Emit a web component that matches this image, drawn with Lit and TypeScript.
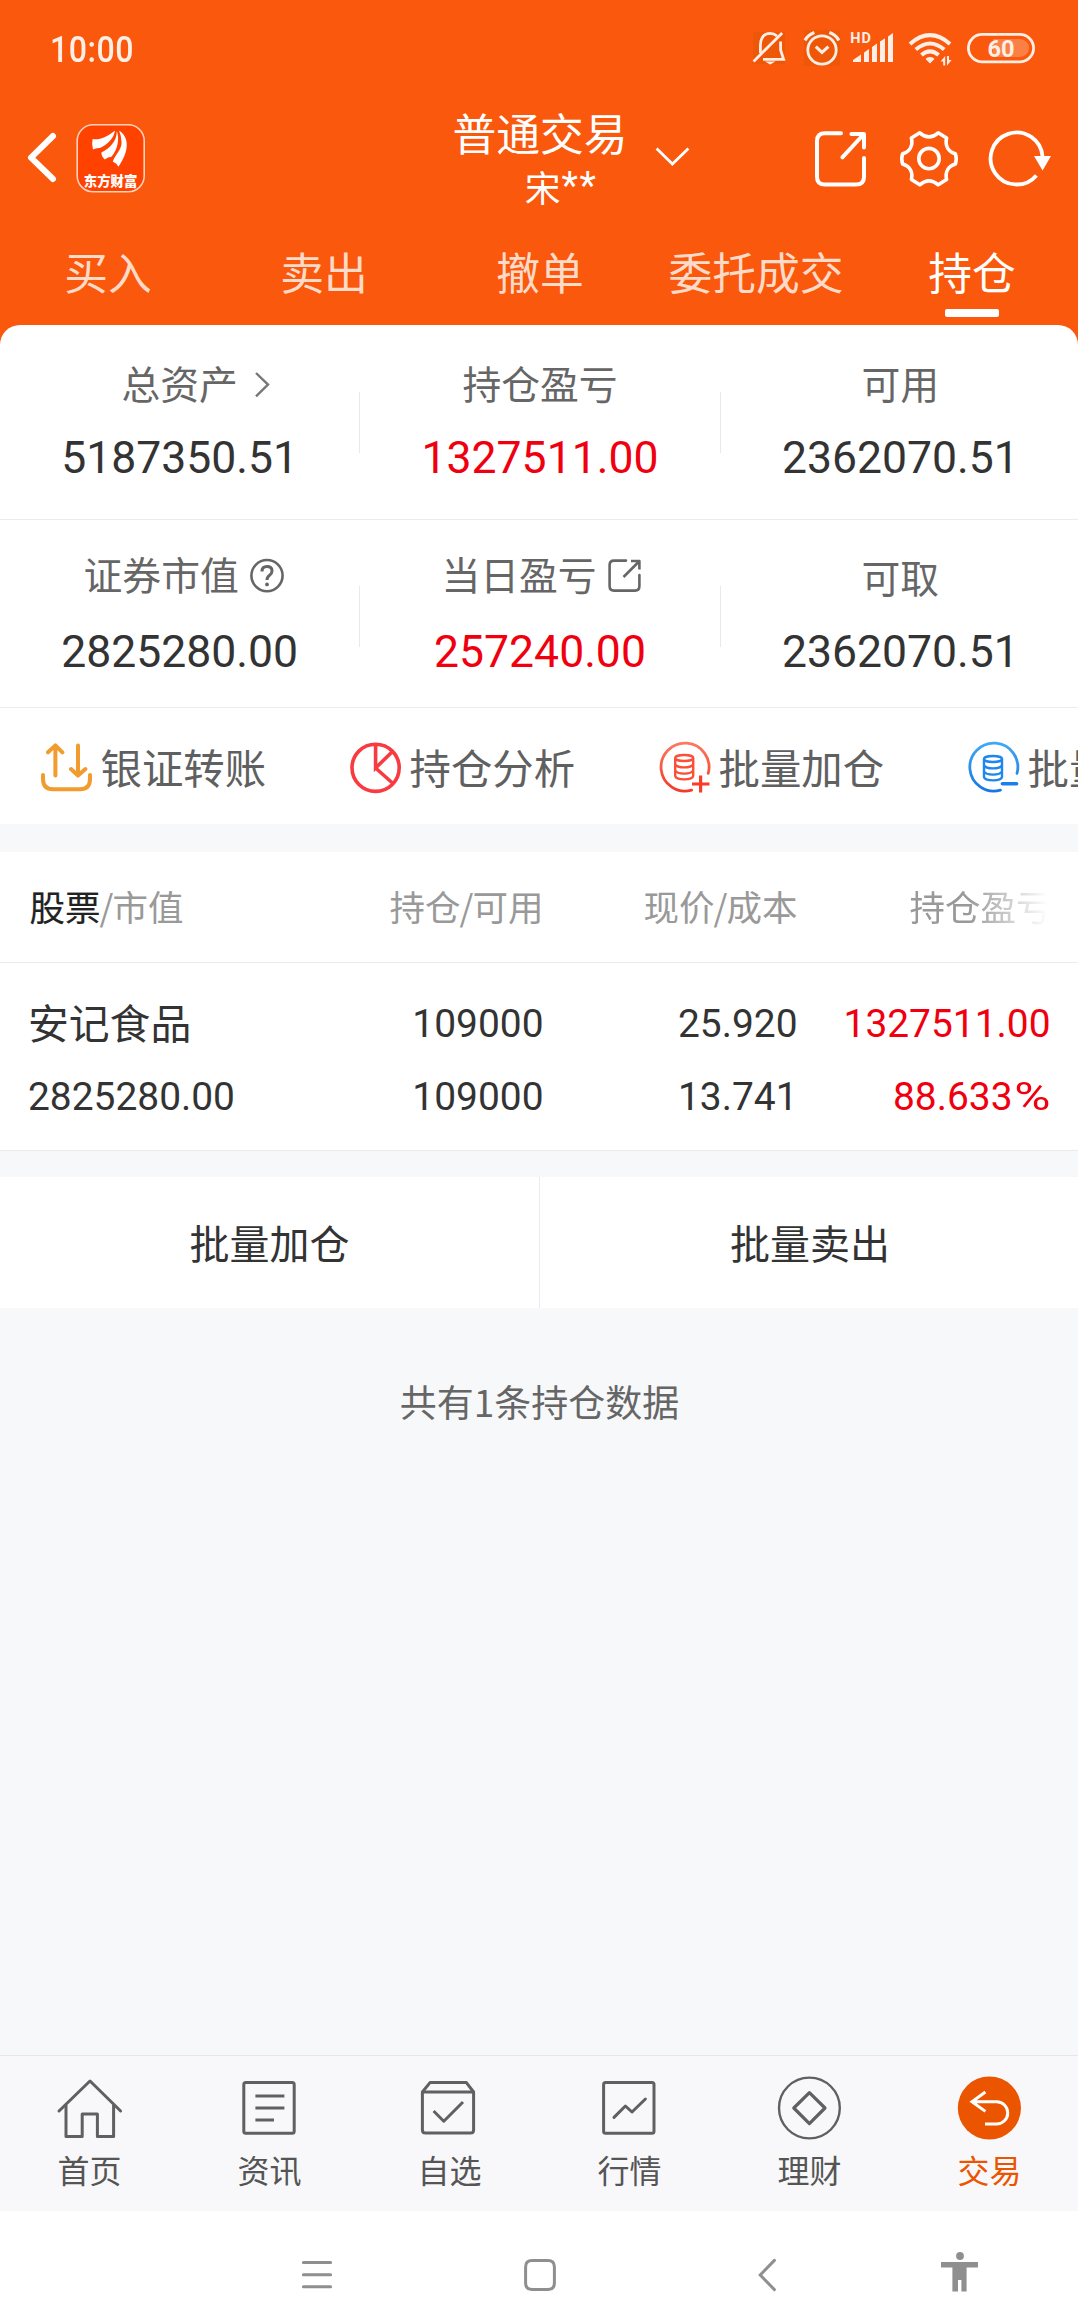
import { LitElement, html, svg, css } from "lit";
import { customElement } from "lit/decorators.js";

const icon = (viewBox: string, w: number, h: number, body: unknown, cls = "") =>
  html`<svg class="icon ${cls}" viewBox=${viewBox} width=${w} height=${h} aria-hidden="true">${body}</svg>`;

const coins = (dx: number, dy: number, paint: string) => svg`
  <g fill="none" stroke=${paint} stroke-width="2.4" transform="translate(${dx} ${dy})">
    <ellipse cx="684.2" cy="758" rx="9" ry="3"/>
    <path d="M675.2 758V776Q676 779.4 684.2 779.4T693.2 776V758M675.2 764.5Q677 767.4 684.2 767.4T693.2 764.5M675.2 770.5Q677 773.6 684.2 773.6T693.2 770.5"/>
  </g>`;

const ring = "M708.2 773.4A24 24 0 1 0 691.6 790.2";

const SMALL_SHARE = icon("606 557 37 37", 37, 37, svg`
  <g fill="none" stroke="#666" stroke-width="2.6" stroke-linejoin="round">
    <path d="M626 560.6H614Q609.6 560.6 609.6 565V586Q609.6 590.6 614 590.6H635Q639.4 590.6 639.4 586V575" stroke-linecap="round"/>
    <path d="M631 561H639.4V569.5M639 561.5L623.5 577"/>
  </g>`);

const HELP = icon("249 558 36 36", 36, 36, svg`
  <g fill="none" stroke="#666" stroke-width="2.6">
    <circle cx="267" cy="575.6" r="15.6"/>
    <path d="M262 571.5Q262 566.6 267 566.6T272 571Q272 573.6 269.6 575.2Q267 577 267 580" stroke-width="3"/>
  </g><circle cx="267" cy="584.4" r="1.9" fill="#666"/>`);

const CHEVRON = icon("252 370 18 30", 18, 30, svg`
  <path d="M255 373L267 384.6L255 396.4" fill="none" stroke="#777" stroke-width="2.4"/>`);

interface Stat { label: string; value: string; up?: boolean; icon?: unknown; kind?: string; }

const STATS: Stat[][] = [
  [
    { label: "总资产", value: "5187350.51", icon: CHEVRON, kind: "more" },
    { label: "持仓盈亏", value: "1327511.00", up: true },
    { label: "可用", value: "2362070.51" },
  ],
  [
    { label: "证券市值", value: "2825280.00", icon: HELP, kind: "help" },
    { label: "当日盈亏", value: "257240.00", up: true, icon: SMALL_SHARE, kind: "share" },
    { label: "可取", value: "2362070.51" },
  ],
];

const ACTIONS = [
  {
    label: "银证转账",
    icon: icon("40 741 54 54", 54, 54, svg`
      <g fill="none" stroke="#f29b2e" stroke-width="4" stroke-linecap="round" stroke-linejoin="round">
        <path d="M43 775V779Q43 789.2 53 789.2H80Q90 789.2 90 779V775"/>
        <path d="M55.4 775.5V746M48 752.3L55.4 745.4L62.4 752.3M78 745.5V775M71 769L78 775.6L85.4 769"/>
      </g>`),
  },
  {
    label: "持仓分析",
    icon: icon("349 741 54 54", 54, 54, svg`
      <g fill="none" stroke="#f83b40" stroke-width="3.6">
        <circle cx="375.6" cy="767.8" r="23.6"/>
        <path d="M375.6 744V768L392.5 751.5M375.6 768L393 783.5"/>
      </g>`),
  },
  {
    label: "批量加仓",
    icon: icon("658 741 54 54", 54, 54, svg`
      <defs><linearGradient id="warm" gradientUnits="userSpaceOnUse" x1="684" y1="743" x2="684" y2="792">
        <stop offset="0" stop-color="#fb7a5e"/><stop offset="1" stop-color="#f23a28"/></linearGradient></defs>
      <path d=${ring} fill="none" stroke="url(#warm)" stroke-width="2.8" stroke-linecap="round"/>
      ${coins(0, 0, "#fa4f38")}
      <path d="M692 784H709.5M700.6 775.4V792.6" stroke="#fa3c28" stroke-width="3.2"/>`),
  },
  {
    label: "批量卖出",
    icon: icon("967 741 54 54", 54, 54, svg`
      <defs><linearGradient id="cool" gradientUnits="userSpaceOnUse" x1="684" y1="743" x2="684" y2="792">
        <stop offset="0" stop-color="#41a8f4"/><stop offset="1" stop-color="#1577e2"/></linearGradient></defs>
      <path d=${ring} transform="translate(308.8 0)" fill="none" stroke="url(#cool)" stroke-width="2.8" stroke-linecap="round"/>
      ${coins(308.8, 1, "#1e86ee")}
      <path d="M1002.4 783.8H1016.6" stroke="#1b7fe8" stroke-width="3.6" stroke-linecap="round"/>`),
  },
];

const line = (body: unknown) => svg`<g fill="none" stroke="#606060" stroke-width="3" stroke-linejoin="round">${body}</g>`;

const TABS = [
  { label: "首页", icon: icon("56 2074 68 68", 68, 68, line(svg`
      <path d="M59 2111L90 2081L120.6 2111" stroke-linecap="round"/>
      <path d="M66 2105V2136.6H82.2V2114H97.4V2136.6H113.6V2105"/>`)) },
  { label: "资讯", icon: icon("236 2074 68 68", 68, 68, line(svg`
      <rect x="243.8" y="2082.6" width="50.4" height="50.6" rx="2"/>
      <path d="M255.4 2096H284.4M255.4 2108H284.4M255.4 2120H274"/>`)) },
  { label: "自选", icon: icon("416 2074 68 68", 68, 68, line(svg`
      <path d="M422.4 2092H473.6V2130Q473.6 2133 470.6 2133H425.4Q422.4 2133 422.4 2130Z"/>
      <path d="M422.4 2092L430 2082.6H466.4L473.6 2092"/>
      <path d="M433.6 2111L443.8 2121.2L463 2102"/>`)) },
  { label: "行情", icon: icon("596 2074 68 68", 68, 68, line(svg`
      <rect x="603.6" y="2082.6" width="50.4" height="50.6" rx="2"/>
      <path d="M614 2117.4L625.4 2106L632 2112L645.4 2099" stroke-linecap="round"/>`)) },
  { label: "理财", icon: icon("776 2074 68 68", 68, 68, line(svg`
      <circle cx="809.4" cy="2108" r="30.4" stroke-width="2.4"/>
      <path d="M809.4 2092.6L825 2108L809.4 2123.6L793.8 2108Z" stroke-width="3.2"/>`)) },
  { label: "交易", active: true, icon: icon("956 2074 68 68", 68, 68, svg`
      <circle cx="989.4" cy="2108" r="31.6" fill="#eb5500"/>
      <path d="M985.4 2092L972 2101.8L985.4 2111.4M972 2101.8H996.6A11.1 11.1 0 0 1 996.6 2124H985" fill="none" stroke="#fff" stroke-width="3"/>`) },
];

@customElement("status-bar")
class StatusBar extends LitElement {
  static styles = css`
    :host { display: flex; align-items: center; height: 96px; color: #ffeee6; }
    .clock { flex: 1; padding: 4px 0 0 50px; }
    .time { display: inline-block; font: 500 36.5px/40px Roboto, sans-serif; letter-spacing: .6px; transform: scaleX(.88); transform-origin: 0 50%; }
    .icon { display: block; flex: none; margin-right: 41px; }
    .hd { font: 700 14.5px Roboto, sans-serif; letter-spacing: 1px; }
    .level { font: 700 24.5px Roboto, sans-serif; }
  `;
  render() {
    return html`
      <div class="clock"><span class="time">10:00</span></div>
      ${icon("751 0 286 96", 286, 96, svg`
        <path d="M753 32H785V64H753ZM804 30H840V66H804Z" fill="#ee5708"/>
        <g fill="none" stroke="#ffeee6" stroke-width="2.8">
          <path d="M760.4 53V45Q761 33.6 770 33.4Q774 33.4 777 36M780.6 41.5V50L783.6 59.4H763"/>
          <path d="M753.6 61.4L782.2 33"/>
          <circle cx="822" cy="50" r="14.2"/>
          <path d="M815.8 46.6L822 52.4L828.4 46.6M805 40.4Q808 35 814.4 32.6M838.8 40.4Q836 35 829.4 32.6" stroke-width="3.2"/>
        </g>
        <path d="M765 61.6H775.4L770.2 64.4Z" fill="#ffeee6"/>
        <text class="hd" x="850.2" y="42.8" fill="#ffeee6">HD</text>
        <g fill="#ffeee6">
          <path d="M853 62V60L861 54.4V62ZM864 62V52.4L869 49V62ZM872 62V47L877 43.6V62ZM880 62V41.6L885 38.2V62ZM888 62V36.4L893 33V62Z"/>
          <path d="M930 62.4L926.6 59Q930 56.6 933.4 59Z" stroke="#ffeee6" stroke-width="1.6" stroke-linejoin="round"/>
          <path d="M940.6 61.4L945.2 56V65.4H943.2V61.4ZM951.6 60L947 65.6V56H949V60Z"/>
        </g>
        <g fill="none" stroke="#ffeee6" stroke-width="4">
          <path d="M910 44Q930 26.4 950 44M915.8 49.6Q930 37.4 944.2 49.6M921.4 55Q930 47.6 938.6 55"/>
        </g>
        <path d="M993 39H1020A9 9 0 0 1 1020 57H993Z" fill="#ffeee6" opacity=".27"/>
        <rect x="968.4" y="34.4" width="65.2" height="27.4" rx="13.7" fill="none" stroke="#ffeee6" stroke-width="2.8"/>
        <text class="level" x="987.4" y="57" textLength="27" lengthAdjust="spacingAndGlyphs" fill="#ffeee6">60</text>`)}`;
  }
}

@customElement("trade-header")
class TradeHeader extends LitElement {
  static styles = css`
    :host { display: block; color: #fff; font-family: "Noto Sans CJK SC", sans-serif; }
    .bar { display: grid; grid-template-columns: 1fr auto 1fr; align-items: center; height: 126px; }
    .left { display: flex; align-items: center; padding-left: 24px; }
    .right { display: flex; align-items: center; padding-right: 24px; }
    .icon { display: block; flex: none; }
    .down { margin: -4px auto 0 25px; }
    .gear { margin: 0 27px 0 27px; }
    .brand { font: 900 13.4px "Noto Sans CJK SC", sans-serif; }
    .title { text-align: center; margin-top: -4px; padding-left: 2px; }
    .name { font-size: 43.8px; line-height: 52px; }
    .user { display: flex; justify-content: center; font-size: 35.8px; line-height: 44px; margin-top: 6px; padding-left: 42px; }
    .mask { font-family: Roboto, sans-serif; font-size: 38px; letter-spacing: 1.5px; margin-left: 1px; }
    .tabs { display: grid; grid-template-columns: repeat(5, 216px); height: 103px; }
    .tab { display: flex; flex-direction: column; align-items: center; font-size: 43.8px; line-height: 60px; padding-top: 19px; box-sizing: border-box; height: 103px; color: #fedac8; white-space: nowrap; }
    .tab.on { color: #fff; }
    .mark { width: 54px; height: 8px; border-radius: 2px; background: #fff; margin-top: 8px; }
  `;
  render() {
    const tabs = ["买入", "卖出", "撤单", "委托成交", "持仓"];
    return html`
      <div class="bar">
        <div class="left">
          ${icon("24 122 124 74", 124, 74, svg`
            <path d="M53 136L31 157.6L53 179" fill="none" stroke="#fff" stroke-width="6" stroke-linecap="round" stroke-linejoin="round"/>
            <rect x="77.2" y="124.8" width="67" height="67" rx="16" fill="#ff4200" stroke="#fdd2bd" stroke-width="1.6"/>
            <g fill="#fff">
              <path d="M115 130.4C107 137 100 140 92.6 139Q91.5 144 93 149.5Q96 147.6 100 148C108 144 114 138 115 130.4Z"/>
              <path d="M116.8 131C117 141 110 148 101.4 152.6Q101.6 157 104.8 159.6Q108 157 111.4 156.8C118.4 149 119.4 138 116.8 131Z"/>
              <path d="M119 130.5C129 137 130 150 118.4 166.8Q116 163 112.8 161.6C114.4 156 121.4 150 121.6 143Q121.6 136 119 130.5Z"/>
            </g>
            <text class="brand" x="83.8" y="186" fill="#fff">东方财富</text>`)}
        </div>
        <div class="title">
          <div class="name">普通交易</div>
          <div class="user"><span>宋</span><span class="mask">**</span></div>
        </div>
        <div class="right">
          ${icon("653 145 40 24", 40, 24, svg`<path d="M656.6 148.6L672.4 164L688.4 148.6" fill="none" stroke="#fff" stroke-width="2.8"/>`, "down")}
          ${icon("812 129 60 60", 60, 60, svg`
            <g fill="none" stroke="#fff" stroke-width="4" stroke-linejoin="round" stroke-linecap="round">
              <path d="M841 133.2H825Q817 133.2 817 141V177Q817 184.6 825 184.6H856Q864 184.6 864 177V158"/>
              <path d="M851.4 134H864V147.6M863 135L842.4 157.4"/>
            </g>`)}
          ${icon("899 129 60 60", 60, 60, svg`
            <g fill="none" stroke="#fff" stroke-width="3.6" stroke-linejoin="round">
              <path d="M919.8 132.8Q929 141 938.2 132.8L946.6 138C944.8 146 948.4 151.6 955.4 153.8Q957 158.6 955.4 164C948.4 166.2 944.8 171.8 946.6 179.4L938.2 184.8Q929 176.8 919.8 184.8L911.4 179.4C913.2 171.8 909.6 166.2 902.6 164Q901 158.6 902.6 153.8C909.6 151.6 913.2 146 911.4 138Z"/>
              <circle cx="929" cy="158.6" r="10.2"/>
            </g>`, "gear")}
          ${icon("986 129 68 60", 68, 60, svg`
            <path d="M1036.4 175.4A26 26 0 1 1 1042.6 157" fill="none" stroke="#fff" stroke-width="3.8"/>
            <path d="M1034 156H1051L1042.6 170.4Z" fill="#fff"/>`)}
        </div>
      </div>
      <div class="tabs">
        ${tabs.map((t, i) => html`<div class="tab ${i === 4 ? "on" : ""}">${t}${i === 4 ? html`<div class="mark"></div>` : ""}</div>`)}
      </div>`;
  }
}

@customElement("app-root")
class AppRoot extends LitElement {
  static styles = css`
    :host { display: flex; flex-direction: column; width: 1078px; height: 2297px; overflow: hidden; background: #f7f8fa; color: #333; font-family: "Noto Sans CJK SC", sans-serif; }
    .icon { display: block; flex: none; overflow: visible; }
    .top { background: #fa580c; flex: none; }
    .stats { background: #fff; border-radius: 20px 20px 0 0; }
    .stat-row { display: flex; width: 1080px; height: 194px; border-bottom: 1px solid #ececee; }
    .stat-row.second { height: 187px; }
    .cell { flex: 1; display: flex; flex-direction: column; align-items: center; padding-top: 32px; }
    .second .cell { padding-top: 31px; }
    .label { display: flex; align-items: center; height: 50px; line-height: 50px; font-size: 38.8px; color: #666; white-space: nowrap; }
    .label .icon { margin-top: 5px; }
    .label.more { gap: 15px; margin-right: -33px; }
    .label.help { gap: 10px; margin: -3px -9px 3px 0; }
    .label.share { gap: 9px; margin: -3px -4px 3px 0; }
    .value { font: 400 44.5px/54px Roboto, sans-serif; margin-top: 24px; }
    .up { color: #f0000f; }
    .sep { width: 1px; height: 61px; margin-top: 67px; background: #e9e9ec; }
    .second .sep { margin-top: 66px; }
    .actions { display: flex; flex: none; align-items: center; height: 116px; overflow: hidden; background: #fff; padding-left: 40px; gap: 82px; }
    .action { display: flex; align-items: center; flex: none; gap: 6.5px; width: 227px; font-size: 41.4px; line-height: 60px; color: #606060; white-space: nowrap; }
    .action .text { margin-top: -1px; }
    .action .icon { margin-top: 3px; }
    .holdings { background: #fff; margin-top: 28px; flex: none; border-bottom: 1px solid #e9eaec; }
    .grid { display: grid; grid-template-columns: 1fr 240px 254px 253px; padding: 0 27.5px 0 28px; text-align: right; }
    .head { height: 110px; line-height: 108px; font-size: 35.5px; color: #999; border-bottom: 1px solid #ececee; }
    .head .first { padding-left: 1.5px; }
    .slash { margin: 0 -1px; }
    .first { text-align: left; }
    .strong { color: #222; -webkit-text-stroke: .2px #222; }
    .faded { text-align: left; padding-left: 112px; white-space: nowrap; -webkit-mask-image: linear-gradient(90deg, #000 170px, transparent 250px); mask-image: linear-gradient(90deg, #000 170px, transparent 250px); }
    .row { height: 187px; padding-top: 24px; box-sizing: border-box; font: 400 38.9px/73px Roboto, sans-serif; grid-auto-rows: 73px; }
    .stock { font-family: "Noto Sans CJK SC", sans-serif; font-size: 40.8px; line-height: 70px; }
    .pct { display: inline-block; line-height: 73px; transform: scaleX(1.27); transform-origin: 100% 50%; margin-left: 9.5px; }
    .buttons { display: grid; grid-template-columns: 539px 541px; height: 131px; margin-top: 26px; flex: none; background: #fff; line-height: 130px; font-size: 40px; text-align: center; }
    .button + .button { border-left: 1px solid #ececee; }
    .note { flex: 1; padding-top: 63px; padding-left: 1px; text-align: center; font-size: 37px; line-height: 60px; color: #666; }
    .tabbar { display: grid; grid-template-columns: repeat(6, 180px); width: 1080px; flex: none; height: 155px; border-top: 1px solid #e4e6e8; background: #f8f8fb; }
    .tab { display: flex; flex-direction: column; align-items: center; padding-top: 18px; font-size: 32px; line-height: 40px; color: #555; }
    .tab .text { margin-top: 7px; padding-right: 1px; }
    .tab.on { color: #eb5500; }
    .system { display: flex; flex: none; height: 86px; padding-left: 297px; background: #fff; }
  `;
  render() {
    const slash = html`<span class="slash">/</span>`;
    return html`
      <div class="top">
        <status-bar></status-bar>
        <trade-header></trade-header>
        <div class="stats">
          ${STATS.map((row, r) => html`
            <div class="stat-row ${r ? "second" : ""}">
              ${row.map((s, i) => html`
                ${i ? html`<div class="sep"></div>` : ""}
                <div class="cell">
                  <div class="label ${s.kind ?? ""}"><span>${s.label}</span>${s.icon ?? ""}</div>
                  <div class="value ${s.up ? "up" : ""}">${s.value}</div>
                </div>`)}
            </div>`)}
        </div>
      </div>
      <div class="actions">
        ${ACTIONS.map((a) => html`<div class="action">${a.icon}<span class="text">${a.label}</span></div>`)}
      </div>
      <div class="holdings">
        <div class="grid head">
          <div class="first"><span class="strong">股票</span>${slash}市值</div>
          <div>持仓${slash}可用</div><div>现价${slash}成本</div><div class="faded">持仓盈亏</div>
        </div>
        <div class="grid row">
          <div class="first stock">安记食品</div><div>109000</div><div>25.920</div><div class="up">1327511.00</div>
          <div class="first">2825280.00</div><div>109000</div><div>13.741</div><div class="up">88.633<span class="pct">%</span></div>
        </div>
      </div>
      <div class="buttons"><div class="button">批量加仓</div><div class="button">批量卖出</div></div>
      <div class="note">共有1条持仓数据</div>
      <div class="tabbar">
        ${TABS.map((t) => html`<div class="tab ${t.active ? "on" : ""}">${t.icon}<span class="text">${t.label}</span></div>`)}
      </div>
      <div class="system">
        ${icon("297 2211 700 86", 700, 86, svg`
          <g fill="none" stroke="#8f8f8f" stroke-width="3" stroke-linecap="round">
            <path d="M303.4 2262.4H330.6M303.4 2274.8H330.6M303.4 2286.8H330.6"/>
            <path d="M532 2260.6H548Q554.4 2260.6 554.4 2267V2283Q554.4 2289.4 548 2289.4H532Q525.6 2289.4 525.6 2283V2267Q525.6 2260.6 532 2260.6Z"/>
            <path d="M774.4 2260.4L760.2 2275L774.4 2289.6"/>
          </g>
          <g fill="#8f8f8f">
            <circle cx="960" cy="2256" r="3.9"/>
            <path d="M941 2262H978V2267.4H966.6V2291.4H961.4V2280H958V2291.4H952.4V2267.4H941Z"/>
          </g>`)}
      </div>`;
  }
}
